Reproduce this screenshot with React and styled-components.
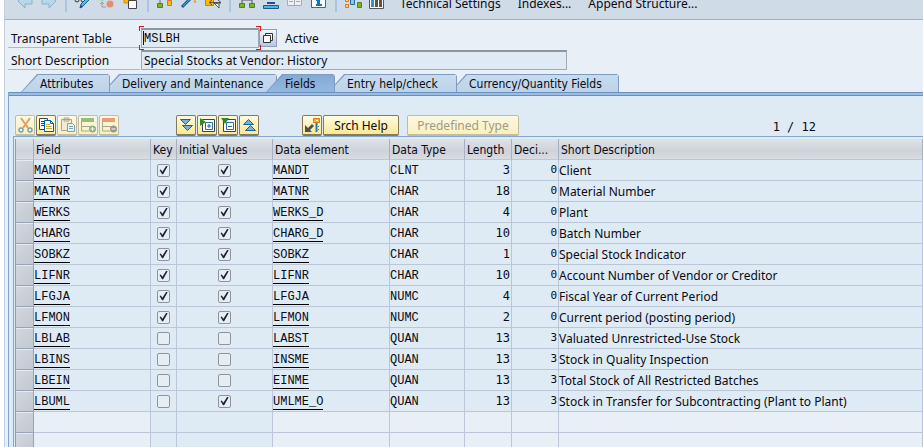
import React, { useState } from "react";
import styled, { createGlobalStyle, css } from "styled-components";

const SANS = '"Noto Sans", "Open Sans", sans-serif';
const TITLES = '"DejaVu Sans Condensed", "Noto Sans", sans-serif';
const MONO = '"Liberation Mono", monospace';
const DIGITS = '"DejaVu Sans Mono", monospace';
const GRID = "#bbc6d8";

const GlobalStyle = createGlobalStyle`
  *, *::before, *::after { box-sizing: border-box; }
  html, body { margin: 0; height: 100%; overflow: hidden; background: #fff; }
  body, button, input { font-family: ${SANS}; font-size: 12px; color: #0a0a14; }
  button { margin: 0; cursor: pointer; }
  a { color: inherit; text-decoration: none; }
`;

const Window = styled.main`
  margin-left: 4px;
  min-height: 100vh;
  border-left: 1px solid #c3cfdc;
  background: #e8eff7;
`;

const AppToolbar = styled.div`
  display: flex;
  align-items: flex-end;
  height: 20px;
  padding: 0 8px 7px;
  overflow: hidden;
  background: #cfdce7;
  border-bottom: 1px solid #9fb1c6;
`;

const ToolIcon = styled.button`
  display: block;
  flex: none;
  width: 24px;
  height: 20px;
  padding: 0;
  border: 0;
  background: none;
  svg { display: block; }
`;

const ToolDivider = styled.span`
  flex: none;
  width: 2px;
  height: 16px;
  margin: 0 4px;
  background: #a9c3e0;
`;

const ToolLinks = styled.div`
  display: flex;
  gap: 17px;
  margin-left: 11px;
`;

const ToolText = styled.button`
  padding: 0;
  border: 0;
  background: none;
  line-height: 16px;
  white-space: nowrap;
`;

const Form = styled.div`
  display: grid;
  grid-template-columns: 132px 1fr;
  row-gap: 2px;
  padding: 8px 3px 4px;
`;

const FieldLabel = styled.label`
  display: flex;
  align-items: flex-end;
  height: 20px;
  padding-left: 3px;
  line-height: 16px;
  border-bottom: 1px solid #b3b8bf;
  white-space: nowrap;
`;

const FieldGroup = styled.div`
  display: flex;
  align-items: center;
  height: 20px;
  margin-left: 1px;
`;

const TextBox = styled.input`
  width: ${(p) => p.$width};
  height: 20px;
  padding: 0 2px;
  border: 1px solid #a3a9b0;
  border-top: 2px solid #8f959c;
  background: #deebf5;
  outline: none;
  ${(p) => p.$code && css`font-family: ${MONO};`}
`;

const FocusFrame = styled.span`
  position: relative;
  display: flex;
`;

const Corner = styled.span`
  position: absolute;
  width: 5px;
  height: 5px;
  border: 0 solid #d8141c;
  pointer-events: none;
  ${(p) => (p.$bottom ? "bottom: -2px; border-bottom-width: 1px;" : "top: -2px; border-top-width: 1px;")}
  ${(p) => (p.$right ? "right: -2px; border-right-width: 1px;" : "left: -2px; border-left-width: 1px;")}
`;

const Caret = styled.span`
  position: absolute;
  top: 3px;
  left: 2px;
  width: 1px;
  height: 14px;
  background: #111;
`;

const MatchButton = styled.button`
  width: 18px;
  height: 18px;
  padding: 0;
  border: 1px solid #8d9fbb;
  background: linear-gradient(#f4f8fc, #b5c7e1);
  svg { display: block; margin: 0 auto; }
`;

const Status = styled.span`
  margin-left: 8px;
`;

const TabBar = styled.div`
  display: flex;
  height: 18px;
  padding-left: 16px;
`;

const Tab = styled.button`
  position: relative;
  z-index: ${(p) => p.$z};
  flex: none;
  width: ${(p) => p.$width}px;
  height: 18px;
  margin-left: ${(p) => (p.$first ? 0 : p.$active ? -11 : -7)}px;
  padding: 2px 0 0 19px;
  border: 0;
  background: #7f9cc0;
  clip-path: polygon(0 100%, 16px 0, calc(100% - 2px) 0, 100% 2px, 100% 100%);
  font-family: ${TITLES};
  text-align: left;
  line-height: 17px;
  white-space: nowrap;
  &::before {
    content: "";
    position: absolute;
    z-index: -1;
    inset: 1px 1px 0 1px;
    background: ${(p) => (p.$active ? "linear-gradient(#83aad6, #94b8e0)" : "linear-gradient(#c7dbee, #bdd3e8)")};
    clip-path: polygon(0 100%, 16px 0, 100% 0, 100% 100%);
  }
`;

const Panel = styled.section`
  margin-left: 3px;
  border-left: 1px solid #7fa3cb;
  background: #deebf5;
`;

const PanelEdge = styled.div`
  height: 4px;
  border: 1px solid #6690bf;
  border-width: 1px 0;
  background: #9dbde2;
`;

const GridToolbar = styled.div`
  display: flex;
  align-items: center;
  padding: 19px 0 0 6px;
`;

const ButtonGroup = styled.div`
  display: flex;
  gap: 1px;
  margin-right: ${(p) => p.$after || 0}px;
`;

const GridButton = styled.button`
  display: flex;
  align-items: center;
  justify-content: center;
  width: ${(p) => p.$width || 20}px;
  height: 21px;
  padding: 0;
  border: 1px solid #857b5c;
  border-bottom-width: 2px;
  border-radius: 2px;
  background: linear-gradient(#fffbe3, #fbe891);
  white-space: nowrap;
  svg { display: block; flex: none; }
  &:disabled {
    border-color: #c2bda2;
    color: #a09b84;
    background: linear-gradient(#fcf9e4, #faf0bd);
    cursor: default;
  }
`;

const Counter = styled.output`
  margin: 3px 107px 0 auto;
  font-family: ${DIGITS};
  white-space: pre;
`;

const Frame = styled.div`
  margin-left: 4px;
  padding: 2px 0 0 1px;
  border-top: 1px solid #83a7cd;
  border-left: 1px solid #83a7cd;
`;

const Table = styled.table`
  width: 100%;
  table-layout: fixed;
  border-collapse: separate;
  border-spacing: 0;
  border-left: 1px solid #8e9db5;
`;

const HeadCell = styled.th`
  height: 21px;
  padding: 1px 0 0 2px;
  border-right: 1px solid #a5b1c2;
  border-bottom: 1px solid ${GRID};
  background: linear-gradient(#dfe3e7, #ced2da 60%, #d9dde1);
  font-family: ${TITLES};
  font-weight: normal;
  text-align: left;
  line-height: 18px;
  white-space: nowrap;
`;

const Cell = styled.td`
  height: 21px;
  padding: 0;
  border-right: 1px solid ${GRID};
  border-bottom: 1px solid ${GRID};
  background: ${(p) => (p.$blank ? "#e8eff7" : "#deebf5")};
  line-height: 18px;
  white-space: nowrap;
`;

const TextCell = styled(Cell)`
  padding-top: 2px;
`;

const CodeCell = styled(TextCell)`
  font-family: ${MONO};
`;

const NumberCell = styled(Cell)`
  padding-right: 1px;
  text-align: right;
  font-family: ${DIGITS};
  font-size: ${(p) => (p.$small ? 11 : 12)}px;
`;

const SelectorCell = styled(Cell)`
  border-color: #98a3b8;
`;

const RowSelector = styled.button`
  display: block;
  width: 100%;
  height: 20px;
  padding: 0;
  border: 0;
  border-top: 1px solid #e6ebf1;
  background: linear-gradient(135deg, #d3d7de, #c2c8d1);
`;

const CodeLink = styled.a`
  display: block;
  width: fit-content;
  line-height: 14px;
  border-bottom: 1px solid #000;
`;

const Check = styled.input.attrs({ type: "checkbox" })`
  appearance: none;
  display: block;
  width: 13px;
  height: 13px;
  margin: 0 auto;
  border: 1px solid #8f9499;
  border-radius: 2px;
  background: #e6eef5;
  &:checked::before {
    content: "";
    display: block;
    width: 9px;
    height: 9px;
    margin: 1px;
    background: #1d2238;
    clip-path: polygon(6% 50%, 20% 44%, 38% 70%, 80% 4%, 96% 8%, 46% 98%, 34% 98%);
  }
`;

const Icon = ({ w = 24, h = 20, children }) => (
  <svg width={w} height={h} viewBox={`0 0 ${w} ${h}`} fill="none" aria-hidden="true">
    {children}
  </svg>
);

const toolGroups = [
  [
    ["Back", <><path d="M5 9 12 2v4h7v6h-7v4z" fill="#bcd6e9" stroke="#85b4d4" /></>],
    ["Forward", <><path d="M19 9 12 2v4H5v6h7v4z" fill="#bcd6e9" stroke="#85b4d4" /></>],
  ],
  [
    ["Display / Change", <><circle cx="6" cy="8" r="2" stroke="#333" /><circle cx="12" cy="8" r="2" stroke="#333" /><path d="m9 16 1-4 8-8 2 2-8 8z" fill="#65b2dc" stroke="#195f91" /><path d="m9 16 1-3 2 2z" fill="#17476c" /></>],
    ["Active / Inactive", <><circle cx="7" cy="5" r="3.500" fill="#91c17b" /><circle cx="15" cy="12" r="3.500" fill="#e88d72" /><path d="M7 11v4h4M5 12l2-2 2 2" stroke="#989ca0" /></>],
    ["Other Object", <><path d="M5 3h11v8H5z" fill="#fdb900" stroke="#d58b00" /><path d="M9.500 8.500h8v8h-8z" fill="#fff" stroke="#444" /></>],
  ],
  [
    ["Check", <><path d="M7 11V5h9v5" stroke="#666" /><path d="M4.500 11.500h5v4h-5z" fill="#7ab51d" stroke="#48842b" /><path d="M14.500 8.500h4v5h-4z" fill="#fdb900" stroke="#df741b" /></>],
    ["Activate", <><path d="m5 15 8-8" stroke="#1c5d90" strokeWidth="3" /><path d="m6 14 6-6" stroke="#55a6d3" /><path d="m13 7 3-3" stroke="#333" strokeWidth="3" /><path d="m17 9 2 1" stroke="#e9a400" strokeWidth="2" /></>],
    ["Where-Used List", <><path d="M4.500 4.500h8v9h-8z" fill="#fdb900" stroke="#df741b" /><path d="M9 10.500h11M11 8l-3 2.500 3 2.500M17 8l3 2.500-3 2.500" stroke="#555" /><path d="m13 11 5 5v-4z" fill="#fff" stroke="#555" /></>],
  ],
  [
    ["Hierarchy", <><path d="M12 4v4M7 12V8h10v4" stroke="#555" /><path d="M4.500 11.500h5v4h-5zM14.500 11.500h5v4h-5z" fill="#7ab51d" stroke="#48842b" /></>],
    ["Object Stack", <><path d="M7 5h10v3H7zM8 10h8v2H8z" fill="#234e97" /><path d="M4.500 13.500h15v3h-15z" fill="#62aedb" stroke="#145d91" /></>],
    ["Documentation", <><path d="M4.500 2.500h14v11h-14zM11.500 4v9" fill="#edf0f2" stroke="#a5abb0" /><path d="M6 6.500h4M13 6.500h4M6 9.500h4M13 9.500h4" stroke="#a5abb0" /></>],
    ["Information", <><path d="M4.500 1.500h14v14h-14z" fill="#fff" stroke="#0a7abd" strokeWidth="1" /><path d="M10 4h3v2h-3zM9 7h4v5h2v2H9v-2h1V9H9z" fill="#0878bc" /></>],
  ],
  [
    ["Graphic", <><path d="M4.500 6.500h3v3h-3zM4.500 12.500h3v3h-3z" fill="#f7d77d" stroke="#e37026" /><path d="M9.500 5.500h4v7h-4z" fill="#91c2df" stroke="#226c9d" /><path d="M16.500 10.500h4v5h-4z" fill="#7ab51d" stroke="#48842b" /></>],
    ["Contents", <><path d="M4.500 2.500h14v14h-14z" fill="#fff" stroke="#555" /><path d="M6 6h3v9H6z" fill="#3c91c1" /><path d="M10 6h3v9h-3zM14 6h3v9h-3z" fill="#555" /></>],
  ],
];

const editButtons = [
  ["Cut", true, <><path d="m4 1 7 10M13 1 6 11" stroke="#dfa25e" strokeWidth="2" /><circle cx="4" cy="13" r="2" stroke="#78a2bc" strokeWidth="1.500" /><circle cx="13" cy="13" r="2" stroke="#78a2bc" strokeWidth="1.500" /></>],
  ["Copy", false, <><path d="M1.500 1.500h8v11h-8zM3 4.500h4M3 6.500h3M3 8.500h3" fill="#fff" stroke="#34444f" /><path d="M6.500 3.500h6l3 3v8h-9z" fill="#fff" stroke="#00649d" /><path d="M12.500 3.500v3h3" stroke="#00649d" /><path d="M8 7.500h4M8 9.500h6M8 11.500h6" stroke="#c9a93c" /></>],
  ["Paste", true, <><path d="M2.500 2.500h10v11h-10zM5 1h5v3H5z" fill="#f0ead0" stroke="#aaa58f" /><path d="M8.500 6.500h5l2 2v6h-7zM10 9.500h4M10 11.500h4" fill="#eaf1ef" stroke="#75a3b9" /></>],
  ["Insert Row", true, <><path d="M1 1h13v4H1z" fill="#97bd77" /><path d="M1.500 5v9H9M2 9.500h8" stroke="#aaa58f" /><circle cx="12.500" cy="12" r="3.500" fill="#94ad82" /><path d="M12.500 10v4M10.500 12h4" stroke="#fff" /></>],
  ["Delete Row", true, <><path d="M1 1h13v4H1z" fill="#eb9c72" /><path d="M1.500 5v9H9M2 9.500h8" stroke="#aaa58f" /><circle cx="12.500" cy="12" r="3.500" fill="#99968e" /><path d="M10.500 12h4" stroke="#fff" /></>],
];

const treeButtons = [
  ["Expand All", <><path d="M2.500 2.500h10l-5 5z" fill="#79b4d4" stroke="#14659a" /><path d="M4.500 8.500h10l-5 5z" fill="#79b4d4" stroke="#14659a" /></>],
  ["Expand Include", <><path d="M3.500 2.500h12v12h-12z" fill="#fff" stroke="#34464b" /><path d="M6.500 5.500h7v7h-7z" fill="#fff" stroke="#25739c" /><path d="M10 7v4M8 9h4" stroke="#14659a" /><path d="m1 1 6 4-6 4z" fill="#348c20" /></>],
  ["Collapse Include", <><path d="M3.500 2.500h12v12h-12z" fill="#fff" stroke="#34464b" /><path d="M6.500 5.500h7v7h-7zM8 9.500h4" fill="#fff" stroke="#25739c" /><path d="M1 1h8L5 7z" fill="#348c20" /></>],
  ["Collapse All", <><path d="m2.500 7.500 5-5 5 5z" fill="#79b4d4" stroke="#14659a" /><path d="m4.500 13.500 5-5 5 5z" fill="#79b4d4" stroke="#14659a" /></>],
];

const tabs = [
  ["Attributes", 89],
  ["Delivery and Maintenance", 174],
  ["Fields", 69],
  ["Entry help/check", 129],
  ["Currency/Quantity Fields", 169],
];

const columns = [
  ["", 18],
  ["Field", 117],
  ["Key", 26],
  ["Initial Values", 96],
  ["Data element", 117],
  ["Data Type", 75],
  ["Length", 47],
  ["Deci...", 47],
  ["Short Description", null],
];

const fields = [
  ["MANDT", 1, 1, "MANDT", "CLNT", 3, 0, "Client"],
  ["MATNR", 1, 1, "MATNR", "CHAR", 18, 0, "Material Number"],
  ["WERKS", 1, 1, "WERKS_D", "CHAR", 4, 0, "Plant"],
  ["CHARG", 1, 1, "CHARG_D", "CHAR", 10, 0, "Batch Number"],
  ["SOBKZ", 1, 1, "SOBKZ", "CHAR", 1, 0, "Special Stock Indicator"],
  ["LIFNR", 1, 1, "LIFNR", "CHAR", 10, 0, "Account Number of Vendor or Creditor"],
  ["LFGJA", 1, 1, "LFGJA", "NUMC", 4, 0, "Fiscal Year of Current Period"],
  ["LFMON", 1, 1, "LFMON", "NUMC", 2, 0, "Current period (posting period)"],
  ["LBLAB", 0, 0, "LABST", "QUAN", 13, 3, "Valuated Unrestricted-Use Stock"],
  ["LBINS", 0, 0, "INSME", "QUAN", 13, 3, "Stock in Quality Inspection"],
  ["LBEIN", 0, 0, "EINME", "QUAN", 13, 3, "Total Stock of All Restricted Batches"],
  ["LBUML", 0, 1, "UMLME_O", "QUAN", 13, 3, "Stock in Transfer for Subcontracting (Plant to Plant)"],
];

function FieldRow({ row }) {
  const [name, key, initial, element, type, length, decimals, text] = row;
  return (
    <tr>
      <SelectorCell><RowSelector aria-label={`Select ${name}`} /></SelectorCell>
      <CodeCell><CodeLink href="#field">{name}</CodeLink></CodeCell>
      <Cell><Check aria-label={`${name} key`} defaultChecked={!!key} /></Cell>
      <Cell><Check aria-label={`${name} initial values`} defaultChecked={!!initial} /></Cell>
      <CodeCell><CodeLink href="#element">{element}</CodeLink></CodeCell>
      <CodeCell>{type}</CodeCell>
      <NumberCell>{length}</NumberCell>
      <NumberCell $small>{decimals}</NumberCell>
      <TextCell>{text}</TextCell>
    </tr>
  );
}

function BlankRow() {
  return (
    <tr>
      <SelectorCell><RowSelector aria-label="Select empty row" /></SelectorCell>
      <Cell $blank />
      <Cell />
      <Cell />
      <Cell $blank />
      <Cell $blank />
      <Cell $blank />
      <Cell $blank />
      <Cell $blank />
    </tr>
  );
}

export default function App() {
  const [active, setActive] = useState(2);
  return (
    <>
      <GlobalStyle />
      <Window>
        <AppToolbar role="toolbar">
          {toolGroups.map((group, i) => (
            <React.Fragment key={i}>
              {i > 0 && <ToolDivider />}
              {group.map(([label, art]) => (
                <ToolIcon key={label} aria-label={label}><Icon>{art}</Icon></ToolIcon>
              ))}
            </React.Fragment>
          ))}
          <ToolLinks>
            <ToolText>Technical Settings</ToolText>
            <ToolText>Indexes...</ToolText>
            <ToolText>Append Structure...</ToolText>
          </ToolLinks>
        </AppToolbar>

        <Form>
          <FieldLabel htmlFor="table-name">Transparent Table</FieldLabel>
          <FieldGroup>
            <FocusFrame>
              <TextBox id="table-name" $width="118px" $code defaultValue="MSLBH" />
              <Caret />
              <Corner /><Corner $right /><Corner $bottom /><Corner $right $bottom />
            </FocusFrame>
            <MatchButton aria-label="Choose table">
              <Icon w={14} h={14}>
                <path d="M4.500 2.500h7v7h-7z" fill="#fff" stroke="#333" />
                <path d="M2.500 4.500h7v7h-7z" fill="#fff" stroke="#333" />
              </Icon>
            </MatchButton>
            <Status>Active</Status>
          </FieldGroup>
          <FieldLabel htmlFor="description">Short Description</FieldLabel>
          <FieldGroup>
            <TextBox id="description" $width="426px" defaultValue="Special Stocks at Vendor: History" />
          </FieldGroup>
        </Form>

        <TabBar role="tablist">
          {tabs.map(([label, width], i) => (
            <Tab
              key={label}
              role="tab"
              aria-selected={i === active}
              $active={i === active}
              $first={i === 0}
              $width={width}
              $z={i === active ? 9 : 5 - i}
              onClick={() => setActive(i)}
            >
              {label}
            </Tab>
          ))}
        </TabBar>

        <Panel>
          <PanelEdge />
          <GridToolbar role="toolbar">
            <ButtonGroup $after={57}>
              {editButtons.map(([label, disabled, art]) => (
                <GridButton key={label} aria-label={label} disabled={disabled}>
                  <Icon w={17} h={16}>{art}</Icon>
                </GridButton>
              ))}
            </ButtonGroup>
            <ButtonGroup $after={43}>
              {treeButtons.map(([label, art]) => (
                <GridButton key={label} aria-label={label}><Icon w={17} h={16}>{art}</Icon></GridButton>
              ))}
            </ButtonGroup>
            <ButtonGroup $after={8}>
              <GridButton aria-label="Foreign Keys">
                <Icon w={17} h={16}>
                  <path d="M9.500 1.500h6v4h-6z" fill="#fdb900" stroke="#df741b" />
                  <path d="M12 3.500h2" stroke="#fff" />
                  <path d="M12.500 6v9" stroke="#2678aa" strokeWidth="2" />
                  <path d="M14 9.500h1M14 12.500h1" stroke="#2678aa" />
                  <path d="M1 8v7h7l-2-2 4-4-2-2-4 4z" fill="#4b5052" />
                </Icon>
              </GridButton>
              <GridButton $width={76}>Srch Help</GridButton>
            </ButtonGroup>
            <GridButton $width={112} disabled>Predefined Type</GridButton>
            <Counter>1 / 12</Counter>
          </GridToolbar>

          <Frame>
            <Table>
              <colgroup>
                {columns.map(([label, width]) => (
                  <col key={label} width={width || undefined} />
                ))}
              </colgroup>
              <thead>
                <tr>
                  {columns.map(([label]) => (
                    <HeadCell key={label} scope="col">{label}</HeadCell>
                  ))}
                </tr>
              </thead>
              <tbody>
                {fields.map((row) => <FieldRow key={row[0]} row={row} />)}
                <BlankRow />
                <BlankRow />
              </tbody>
            </Table>
          </Frame>
        </Panel>
      </Window>
    </>
  );
}
